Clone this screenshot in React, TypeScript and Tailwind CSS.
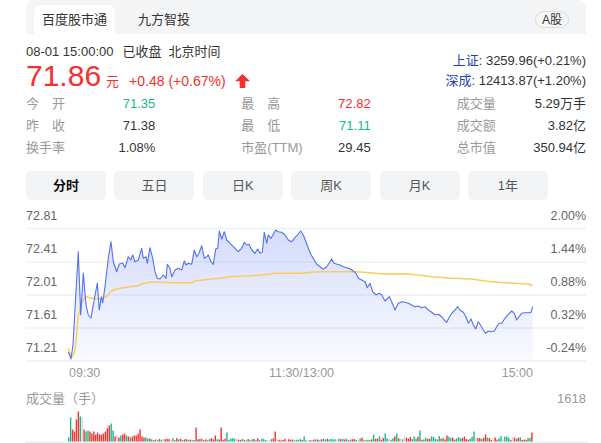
import React from "react";

const RED = "#f5302f";
const GREEN = "#13b98b";

// minute line, page coordinates
const PRICE: [number, number][] = [
  [68.5, 352], [71, 359], [73, 345], [75.5, 300], [78.3, 251.7], [80.7, 315], [83.3, 273], [86, 305], [88.3, 315],
  [91, 318], [93.3, 305], [97.3, 283], [99.3, 310], [101.3, 296.7], [102.7, 303], [105, 286.7], [108.3, 258],
  [111, 241.7], [113.3, 261.7], [116.7, 271.7], [119.3, 264], [122.7, 263], [125, 267.7], [128.3, 256.7],
  [130.7, 260], [132.7, 255], [135, 261.7], [138.3, 260], [141.7, 248.3], [143.3, 258.3], [146, 256.7],
  [147.3, 263.3], [150, 247.7], [152.7, 258.3], [155, 271.7], [157.3, 278.3], [160, 279], [163.3, 275],
  [166, 278.3], [167.3, 264.3], [170, 268.3], [171.7, 276.7], [175, 270], [178.3, 268.3], [181.7, 270],
  [184.3, 261], [186, 265], [188.3, 263.3], [191.7, 264.3], [194.3, 250], [196.7, 256.7], [199, 253.3],
  [201.7, 245.7], [204.3, 258.3], [206.7, 256.7], [208.3, 255], [211, 261.7], [213.3, 264.3], [215.7, 249],
  [217.7, 248.3], [219.3, 231], [221.7, 239], [224.3, 231.7], [226.7, 240], [230, 243.3], [233.3, 246.7],
  [238.3, 251.7], [241.7, 248.3], [244.3, 242.3], [246.7, 245], [249, 244.3], [251.7, 250], [255, 253.3],
  [257.7, 249], [260, 253.3], [262.3, 252.3], [264.3, 232.3], [266.7, 243.3], [268.3, 235], [271, 238.3],
  [273.3, 234.3], [275.7, 230], [278.3, 231.7], [281.7, 232.3], [285, 235], [288.3, 240], [291.7, 241.7],
  [294.3, 238.3], [297.3, 235], [300.7, 231], [303.3, 235], [306, 241.7], [308.3, 248.3], [310.7, 254.3],
  [313.3, 258.3], [316.7, 264.3], [320, 266.7], [323.3, 269.3], [326.7, 266.7], [330, 261.7], [331.7, 259],
  [334, 263.3], [337.3, 264.3], [340, 265], [343.3, 266.7], [346.7, 267.7], [350, 269], [353.3, 271],
  [356, 273.3], [358.3, 278.3], [361.7, 280], [365, 281.7], [367.3, 287.7], [370, 283.3], [372.7, 291.7],
  [376, 295], [379.3, 293.3], [381.7, 295], [385, 301], [389.3, 296.7], [391.7, 301.7], [395, 310],
  [398.3, 303.3], [401.7, 301.7], [405, 302.3], [408.3, 303.3], [411.7, 305], [415, 306.7], [418.3, 306],
  [421.7, 307.7], [425, 306.7], [428.3, 310], [431.7, 312.3], [435, 315], [438.3, 314.3], [441.7, 316.7],
  [444.3, 320], [446.7, 322.3], [449, 317.7], [451.7, 313.3], [455, 310], [457.7, 306.7], [460, 310],
  [463.3, 312.3], [466, 316.7], [468.3, 323.3], [471, 319], [473.3, 325], [475.7, 329], [478.3, 321.7],
  [481, 325.7], [483.3, 330], [485.7, 333.3], [488.3, 331], [491, 331.7], [494.3, 331], [496.7, 326.7],
  [499, 323.3], [501.7, 323.3], [505, 318.3], [508.3, 314.3], [511.7, 311], [514.3, 313.3], [516.7, 320],
  [519, 316.7], [521.7, 313.3], [525, 312.7], [529, 312.7], [531, 312.3], [532.7, 306.7],
];

const AVG: [number, number][] = [
  [68.3, 348.3], [70, 353], [71.7, 356.7], [73.5, 355], [75, 350], [76.5, 335], [78.3, 315], [81.7, 303.3],
  [84, 298], [86.7, 296.7], [91.7, 298.3], [96.7, 299], [103.3, 298.3], [108.3, 295], [110, 292], [113.3, 290],
  [120, 288.3], [130, 286.7], [138.3, 285.7], [143.3, 283.3], [150, 282.3], [160, 282.3], [175, 282.7],
  [191.7, 282.7], [195, 281], [208.3, 279.3], [225, 277.7], [228.3, 276.7], [251.7, 275.7], [268.3, 274.3],
  [275, 273.3], [300, 273.3], [316.7, 271.7], [356.7, 271.7], [370, 272.7], [383.3, 274], [405, 273.7],
  [418.3, 275], [431.7, 276.7], [451.7, 278.3], [471.7, 279], [485, 281], [498.3, 282.3], [515, 283.3],
  [528.3, 284], [532.7, 285.7],
];

const toPath = (pts: [number, number][]) =>
  pts.map(([x, y], i) => `${i ? "L" : "M"}${(x - 26).toFixed(1)} ${(y - 200).toFixed(1)}`).join(" ");

// volume bars
const EARLY_H = [4, 24, 12, 10, 22, 30, 25, 24, 12, 10, 11, 10, 8, 10, 7, 9, 7, 7, 8, 10, 13, 16, 18, 11, 5, 6, 4, 6, 7, 8, 6, 5, 4, 5, 6, 6, 8, 12, 5, 4, 4, 3, 3];
const EARLY_C = "ggrrrrgprggrrrrrrrrrrrggrprgrrgrgrrrrrrrggr";
const SPIKES: Record<number, [number, string]> = {
  66: [14, "r"], 76: [6, "r"], 79: [14, "r"], 82: [9, "g"], 107: [10, "r"], 122: [5, "g"], 152: [4, "r"],
  158: [7, "g"], 164: [8, "g"], 170: [8, "g"], 182: [11, "g"], 196: [6, "r"], 210: [10, "g"], 216: [7, "r"], 240: [9, "r"],
};

let seed = 7;
const rnd = () => {
  seed = (seed * 9301 + 49297) % 233280;
  return seed / 233280;
};

const VOL = Array.from({ length: 241 }, (_, i) => {
  let h: number;
  let c: string;
  if (i < EARLY_H.length) {
    h = EARLY_H[i];
    c = EARLY_C[i];
  } else if (SPIKES[i]) {
    [h, c] = SPIKES[i];
  } else {
    const r = rnd();
    h = i < 110 ? 1 + r * 2.5 : i < 160 ? 1 + r * 2 : 1.5 + r * 4;
    const k = rnd();
    c = k < 0.08 ? "p" : k < 0.5 ? "r" : "g";
  }
  const fill = c === "r" ? RED : c === "g" ? GREEN : c === "p" ? "#f6c4c6" : "#d5d8dd";
  return { x: 68 - 26 + i * 1.93, h, fill };
});

const Y_LEFT = ["72.81", "72.41", "72.01", "71.61", "71.21"];
const Y_RIGHT = ["2.00%", "1.44%", "0.88%", "0.32%", "-0.24%"];
const GRID = [28.5, 62, 95, 128, 161];

function Stat({ label, value, color, spread }: { label: string; value: string; color?: string; spread?: boolean }) {
  return (
    <div className="flex justify-between">
      {spread ? (
        <span className="flex w-[39px] justify-between text-[#999]">
          <span>{label[0]}</span>
          <span>{label[1]}</span>
        </span>
      ) : (
        <span className="text-[#999]">{label}</span>
      )}
      <span style={color ? { color } : undefined} className={color ? "" : "text-[#333]"}>
        {value}
      </span>
    </div>
  );
}

export default function App() {
  const tabs = ["分时", "五日", "日K", "周K", "月K", "1年"];
  return (
    <div className="h-[443px] w-[601px] overflow-hidden bg-white font-[family-name:Liberation_Sans,Noto_Sans_CJK_SC,sans-serif] text-[13px] text-[#333]">
      <div className="ml-[26px] w-[560px]">
        {/* tab bar */}
        <div className="flex h-[34px] items-end rounded-t-[8px] bg-[#f4f5f7] pl-[8px] pr-[17px]">
          <div className="flex h-[29px] items-center rounded-t-[6px] bg-white px-[8px] text-[#333]">百度股市通</div>
          <div className="ml-[15px] flex h-[29px] items-center px-[8px] text-[#333]">九方智投</div>
          <div className="mb-[6px] ml-auto flex h-[17px] items-center rounded-full border border-[#dcdcdc] bg-[#f7f7f7] px-[6px] text-[12px] leading-none text-[#333]">
            A股
          </div>
        </div>

        {/* quote header */}
        <div className="flex justify-between">
          <div className="pt-[9px]">
            <div className="flex leading-[17px]">
              <span>08-01 15:00:00</span>
              <span className="ml-[9px]">已收盘</span>
              <span className="ml-[7px]">北京时间</span>
            </div>
            <div className="flex h-[32px] items-baseline text-[#f5302f]">
              <span className="text-[30px] leading-[32px]">71.86</span>
              <span className="ml-[5px] text-[13px]">元</span>
              <span className="ml-[10px] text-[14px]">+0.48 (+0.67%)</span>
              <svg className="mb-[4px] ml-[9px] self-end" width="15" height="14" viewBox="0 0 15 14">
                <path d="M7.5 0 L15 7.2 H10.3 V14 H4.7 V7.2 H0 Z" fill="#f5302f" />
              </svg>
            </div>
          </div>
          <div className="pt-[17px] text-right leading-[20px]">
            <div>
              <span className="text-[#2440b3]">上证</span>: 3259.96(+0.21%)
            </div>
            <div>
              <span className="text-[#2440b3]">深成</span>: 12413.87(+1.20%)
            </div>
          </div>
        </div>

        {/* stats */}
        <div className="mt-px grid grid-cols-3 gap-x-[86px] leading-[22px]">
          <Stat label="今开" value="71.35" color={GREEN} spread />
          <Stat label="最高" value="72.82" color={RED} spread />
          <Stat label="成交量" value="5.29万手" />
          <Stat label="昨收" value="71.38" spread />
          <Stat label="最低" value="71.11" color={GREEN} spread />
          <Stat label="成交额" value="3.82亿" />
          <Stat label="换手率" value="1.08%" />
          <Stat label="市盈(TTM)" value="29.45" />
          <Stat label="总市值" value="350.94亿" />
        </div>

        {/* period tabs */}
        <div className="mt-[12px] flex gap-[8.4px]">
          {tabs.map((t, i) => (
            <div
              key={t}
              className={
                "flex h-[29px] w-[80px] items-center justify-center rounded-[5px] bg-[#f3f4f6] " +
                (i === 0 ? "font-bold text-[#111]" : "text-[#555]")
              }
            >
              {t}
            </div>
          ))}
        </div>

        {/* minute chart */}
        <svg width="560" height="184" className="block text-[12.5px]">
          <defs>
            <linearGradient id="fillg" x1="0" y1="0" x2="0" y2="1">
              <stop offset="0" stopColor="#4e6ef2" stopOpacity="0.24" />
              <stop offset="1" stopColor="#4e6ef2" stopOpacity="0.03" />
            </linearGradient>
          </defs>
          {GRID.map((y) => (
            <line key={y} x1="0" x2="560" y1={y} y2={y} stroke="#f0f1f3" strokeWidth="1.5" />
          ))}
          <path d={`${toPath(PRICE)} L506.7 161 L42.5 161 Z`} fill="url(#fillg)" />
          <path d={toPath(AVG)} fill="none" stroke="#f8cd5e" strokeWidth="1.5" strokeLinejoin="round" />
          <path d={toPath(PRICE)} fill="none" stroke="#5272ee" strokeWidth="1.1" strokeLinejoin="round" />
          {Y_LEFT.map((t, i) => (
            <text key={t} x="0" y={16 + i * 33} dominantBaseline="central" fill="#666">
              {t}
            </text>
          ))}
          {Y_RIGHT.map((t, i) => (
            <text key={t} x="560" y={16 + i * 33} dominantBaseline="central" textAnchor="end" fill="#666">
              {t}
            </text>
          ))}
          <text x="43" y="173" dominantBaseline="central" fill="#999">09:30</text>
          <text x="275.5" y="173" dominantBaseline="central" textAnchor="middle" fill="#999">11:30/13:00</text>
          <text x="507" y="173" dominantBaseline="central" textAnchor="end" fill="#999">15:00</text>
        </svg>

        {/* volume */}
        <div className="mt-[7px] flex justify-between leading-[16px] text-[#999]">
          <span>成交量（手）</span>
          <span>1618</span>
        </div>
        <svg width="562" height="36" className="block">
          <line x1="0" x2="562" y1="35" y2="35" stroke="#eeeff1" strokeWidth="1.5" />
          {VOL.map((b, i) => (
            <rect key={i} x={b.x} y={34.5 - b.h} width="1.4" height={b.h} fill={b.fill} />
          ))}
        </svg>
      </div>
    </div>
  );
}
